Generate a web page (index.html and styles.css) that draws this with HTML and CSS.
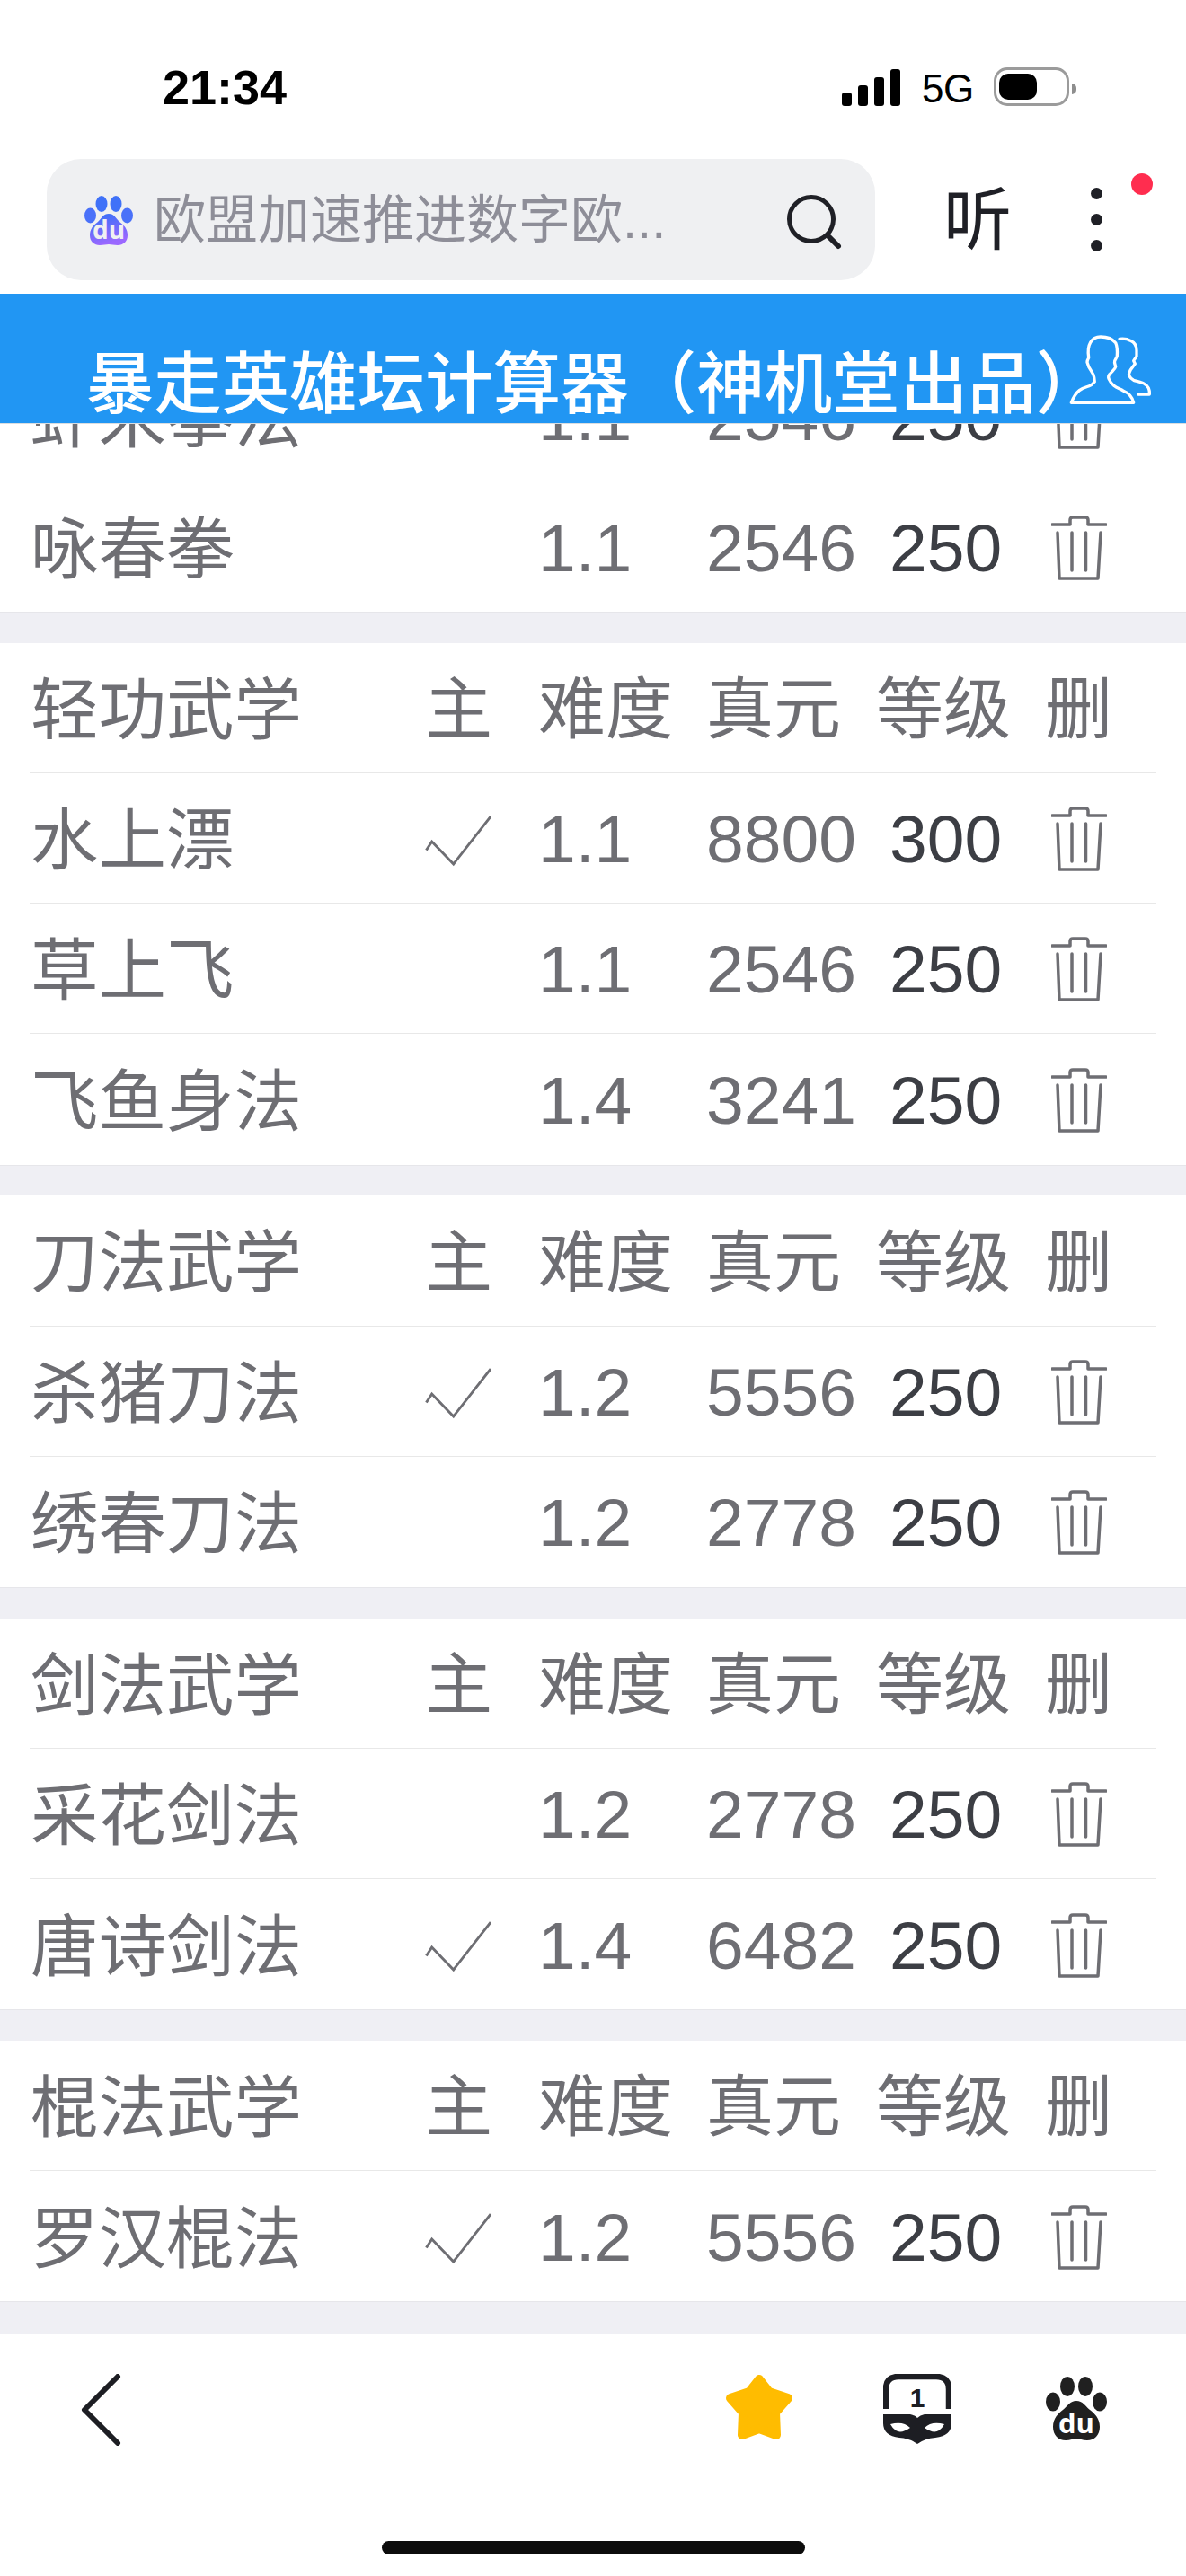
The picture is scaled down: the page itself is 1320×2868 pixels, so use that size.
FILE: index.html
```html
<!DOCTYPE html>
<html lang="zh">
<head>
<meta charset="utf-8">
<title>暴走英雄坛计算器</title>
<link rel="stylesheet" href="styles.css">
</head>
<body>
<div class="phone">
  <header class="status">
    <span class="time">21:34</span>
    <div class="status-right">
      <div class="signal"><i class="b1"></i><i class="b2"></i><i class="b3"></i><i class="b4"></i></div>
      <span class="net">5G</span>
      <div class="battery"><div class="battery-fill"></div></div>
      <div class="battery-cap"></div>
    </div>
  </header>

  <div class="browser">
    <div class="search">
      <svg class="paw" viewBox="0 0 54 56"><defs><linearGradient id="pg" x1="0" y1="0" x2="0.3" y2="1"><stop offset="0" stop-color="#3170f7"/><stop offset="1" stop-color="#9b68ff"/></linearGradient></defs><g fill="url(#pg)"><path d="M27 21c-6 0-8 5-12 9-4 3-9 7-9 15 0 7 5 11 11 11 4 0 7-1 10-1s6 1 10 1c6 0 11-4 11-11 0-8-5-12-9-15-4-4-6-9-12-9z"/></g><ellipse cx="19" cy="10" rx="6.500" ry="9" fill="#3f71f8"/><ellipse cx="35" cy="10" rx="6.500" ry="9" fill="#3f71f8"/><ellipse cx="6.500" cy="23" rx="6.500" ry="8.500" fill="#4a71f9"/><ellipse cx="47.500" cy="23" rx="6.500" ry="8.500" fill="#4a71f9"/><text class="du" x="27" y="49" text-anchor="middle">du</text></svg>
      <span class="query">欧盟加速推进数字欧...</span>
      <svg class="lens" viewBox="0 0 64 64"><circle cx="29" cy="29" r="24.500" fill="none" stroke="#1f2026" stroke-width="5"/><path d="M48 48l11 11" stroke="#1f2026" stroke-width="6" stroke-linecap="round"/></svg>
    </div>
    <span class="listen">听</span>
    <div class="more"><i></i><i></i><i></i></div>
    <span class="red-dot"></span>
  </div>

  <div class="title-bar">
    <h1 class="title">暴走英雄坛计算器（神机堂出品）</h1>
    <svg class="users" viewBox="0 0 94 80" fill="none" stroke="#fff" stroke-width="3.300" stroke-linejoin="round" stroke-linecap="round"><path d="M2.300 76.300H71.700C70 69 65 65 60 63 55 60 48 59 44 49.700 43 47 45 44.700 45 44.700 48 41 51 39 51.700 36.300 51 33 50 32 50.700 29.700L53.300 24.700C54 15 51.700 9.700 51.700 9.700 48 5 41.700 3 35 3 25 3 19.300 11.300 21.700 26.300 20 29 20 31.300 20 31.300L21.700 36.300C24 40 26.700 44.700 26.700 44.700 28 48 28.300 53 28.300 53 25 57 21.700 58 21.700 58 15 60 8.300 61.300 2.300 76.300Z"/><path d="M56 5.300C60 4.800 65 5.300 68.300 7.300 73 9.500 75 13 75 18V24.700L71.700 29.700 73.300 33 68.300 39.700C66.700 43 66 46 66.700 46.300 68 49 69 50 71.700 51.300 79 53.500 85 54 88.300 60 89.500 63 89.500 65 89.300 67H76.700"/></svg>
  </div>

  <main class="list">
    <section class="group group-scrolled">
      <div class="row"><span class="name">虾米拳法</span><span class="main"></span><span class="num">1.1</span><span class="num zy">2546</span><span class="lvl">250</span><svg class="trash" viewBox="0 0 62 73"><use href="#t"/></svg></div>
      <div class="row"><span class="name">咏春拳</span><span class="main"></span><span class="num">1.1</span><span class="num zy">2546</span><span class="lvl">250</span><svg class="trash" viewBox="0 0 62 73"><use href="#t"/></svg></div>
    </section>

    <section class="group">
      <div class="row"><span class="name">轻功武学</span><span class="main head">主</span><span class="head">难度</span><span class="head head-z">真元</span><span class="head head-l">等级</span><span class="head del">删</span></div>
      <div class="row"><span class="name">水上漂</span><span class="main"><svg class="check" viewBox="0 0 78 60"><use href="#c"/></svg></span><span class="num">1.1</span><span class="num zy">8800</span><span class="lvl">300</span><svg class="trash" viewBox="0 0 62 73"><use href="#t"/></svg></div>
      <div class="row"><span class="name">草上飞</span><span class="main"></span><span class="num">1.1</span><span class="num zy">2546</span><span class="lvl">250</span><svg class="trash" viewBox="0 0 62 73"><use href="#t"/></svg></div>
      <div class="row"><span class="name">飞鱼身法</span><span class="main"></span><span class="num">1.4</span><span class="num zy">3241</span><span class="lvl">250</span><svg class="trash" viewBox="0 0 62 73"><use href="#t"/></svg></div>
    </section>

    <section class="group">
      <div class="row"><span class="name">刀法武学</span><span class="main head">主</span><span class="head">难度</span><span class="head head-z">真元</span><span class="head head-l">等级</span><span class="head del">删</span></div>
      <div class="row"><span class="name">杀猪刀法</span><span class="main"><svg class="check" viewBox="0 0 78 60"><use href="#c"/></svg></span><span class="num">1.2</span><span class="num zy">5556</span><span class="lvl">250</span><svg class="trash" viewBox="0 0 62 73"><use href="#t"/></svg></div>
      <div class="row"><span class="name">绣春刀法</span><span class="main"></span><span class="num">1.2</span><span class="num zy">2778</span><span class="lvl">250</span><svg class="trash" viewBox="0 0 62 73"><use href="#t"/></svg></div>
    </section>

    <section class="group">
      <div class="row"><span class="name">剑法武学</span><span class="main head">主</span><span class="head">难度</span><span class="head head-z">真元</span><span class="head head-l">等级</span><span class="head del">删</span></div>
      <div class="row"><span class="name">采花剑法</span><span class="main"></span><span class="num">1.2</span><span class="num zy">2778</span><span class="lvl">250</span><svg class="trash" viewBox="0 0 62 73"><use href="#t"/></svg></div>
      <div class="row"><span class="name">唐诗剑法</span><span class="main"><svg class="check" viewBox="0 0 78 60"><use href="#c"/></svg></span><span class="num">1.4</span><span class="num zy">6482</span><span class="lvl">250</span><svg class="trash" viewBox="0 0 62 73"><use href="#t"/></svg></div>
    </section>

    <section class="group">
      <div class="row"><span class="name">棍法武学</span><span class="main head">主</span><span class="head">难度</span><span class="head head-z">真元</span><span class="head head-l">等级</span><span class="head del">删</span></div>
      <div class="row"><span class="name">罗汉棍法</span><span class="main"><svg class="check" viewBox="0 0 78 60"><use href="#c"/></svg></span><span class="num">1.2</span><span class="num zy">5556</span><span class="lvl">250</span><svg class="trash" viewBox="0 0 62 73"><use href="#t"/></svg></div>
    </section>
  </main>

  <footer class="toolbar">
    <svg class="back" viewBox="0 0 46 80"><path d="M42 3L5 40l37 37" fill="none" stroke="#1d1e23" stroke-width="6" stroke-linecap="round" stroke-linejoin="round"/></svg>
    <div class="tools">
      <svg class="star" viewBox="0 0 76 74"><path d="M38 6L49 20 70 27 56 43 57 68 38 61 19 68 20 43 6 27 27 20z" fill="#ffbc00" stroke="#ffbc00" stroke-width="10" stroke-linejoin="round"/></svg>
      <svg class="mask" viewBox="0 0 76 78"><path d="M3 39V17Q3 3 17 3H59Q73 3 73 17V39" fill="none" stroke="#1d1e23" stroke-width="6.500"/><text class="tab-num" x="38" y="37" text-anchor="middle">1</text><path d="M0 45H30Q35 46 38 49Q41 46 46 45H76V55Q76 69 58 71Q46 72 38 78Q30 72 18 71Q0 69 0 55Z" fill="#1d1e23"/><path d="M8 56Q22 52 30 60Q20 67 14 63Q10 60 8 56Z M68 56Q54 52 46 60Q56 67 62 63Q66 60 68 56Z" fill="#fff"/></svg>
      <svg class="paw-dark" viewBox="0 0 68 72"><path d="M34 27c-7 0-10 6-15 10-5 4-11 9-11 19 0 9 6 15 14 15 5 0 9-2 12-2s7 2 12 2c8 0 14-6 14-15 0-10-6-15-11-19-5-4-8-10-15-10z" fill="#202020"/><ellipse cx="24" cy="11" rx="8" ry="11" fill="#202020"/><ellipse cx="44" cy="11" rx="8" ry="11" fill="#202020"/><ellipse cx="8" cy="28" rx="8" ry="10.500" fill="#202020"/><ellipse cx="60" cy="28" rx="8" ry="10.500" fill="#202020"/><text class="du-dark" x="34" y="63" text-anchor="middle">du</text></svg>
    </div>
  </footer>
  <div class="home-area"><div class="home-bar"></div></div>
</div>

<svg class="defs" width="0" height="0">
  <symbol id="t" viewBox="0 0 62 73"><path d="M1 10H21V5Q21 2 24 2H38Q41 2 41 5V10H61M7 19L9 70H52L55 19M23 19V61M38.500 19V61" fill="none" stroke="#6e6e73" stroke-width="3.500" stroke-linecap="round" stroke-linejoin="round"/></symbol>
  <symbol id="c" viewBox="0 0 78 60"><path d="M1.500 41L8 31 33 57 76 2" fill="none" stroke="#6e6e73" stroke-width="3"/></symbol>
</svg>
</body>
</html>
```

FILE: styles.css
```css
* { box-sizing: border-box; }
html, body { margin: 0; padding: 0; background: #fff; }
body { font-family: "Liberation Sans", "Noto Sans CJK SC", sans-serif; }
.phone { width: 1320px; height: 2868px; display: flex; flex-direction: column; overflow: hidden; position: relative; }

.status { height: 177px; flex: none; display: flex; justify-content: space-between; padding: 75px 122px 0 181px; align-items: flex-start; }
.time { font-size: 54px; font-weight: 700; line-height: 45px; color: #000; }
.status-right { display: flex; align-items: flex-end; height: 43px; }
.signal { display: flex; align-items: flex-end; gap: 7px; width: 65px; height: 41px; }
.signal i { display: block; width: 11px; background: #000; border-radius: 3px; }
.b1 { height: 15px; } .b2 { height: 23px; } .b3 { height: 32px; } .b4 { height: 41px; }
.net { font-size: 44px; line-height: 38px; color: #000; margin-left: 24px; width: 56px; letter-spacing: -0.500px; }
.battery { width: 84px; height: 43px; margin-left: 24px; border: 3px solid #9b9b9b; border-radius: 15px; padding: 4px 3px; }
.battery-fill { width: 42px; height: 29px; background: #000; border-radius: 10px; }
.battery-cap { width: 5px; height: 12px; background: #8e8e8e; border-radius: 0 5px 5px 0; margin: 0 0 13px 3px; }

.browser { height: 150px; flex: none; position: relative; display: flex; align-items: flex-start; padding-left: 52px; }
.search { width: 922px; height: 135px; background: #eff0f2; border-radius: 38px; display: flex; align-items: center; padding: 0 36px 0 42px; flex: none; }
.paw { width: 54px; height: 56px; flex: none; }
.du { font: 700 28px "Open Sans", "Liberation Sans", sans-serif; fill: #eff0f2; }
.query { font-size: 58px; color: #8e8e98; margin-left: 23px; white-space: nowrap; line-height: 70px; }
.lens { width: 64px; height: 64px; margin-left: auto; margin-top: 4px; flex: none; }
.listen { font-size: 76px; line-height: 76px; color: #1f2026; margin: 31px 0 0 76px; }
.more { margin: 32px 0 0 88px; display: flex; flex-direction: column; gap: 16px; }
.more i { display: block; width: 13px; height: 13px; border-radius: 50%; background: #1f2026; }
.red-dot { position: absolute; left: 1259px; top: 16px; width: 24px; height: 24px; border-radius: 50%; background: #ff2d4f; }

.title-bar { height: 145px; flex: none; background: #2196f3; position: relative; z-index: 2; border-bottom: 1px solid #d9dde0; display: flex; align-items: flex-end; justify-content: center; padding-left: 4px; }
.title { margin: 0 0 2px; font-size: 75.500px; line-height: 82px; font-weight: 500; color: #fff; white-space: nowrap; }
.users { position: absolute; left: 1190px; top: 45px; width: 94px; height: 80px; }

.list { flex: 1 1 0; min-height: 0; overflow: hidden; background: #efeff4; }
.group { background: #fff; padding-left: 33px; margin-bottom: 33.700px; border-bottom: 1px solid #e6e6ea; }
.group-scrolled { margin-top: -81.200px; }
.row { height: 145.200px; width: 1254px; display: grid; grid-template-columns: 440px 129px 185px 189px 190px 1fr; align-items: center; border-bottom: 1px solid #e8e8e8; font-size: 75px; color: #6e6e73; white-space: nowrap; }
.row:last-child { border-bottom: 0; }
.name { margin-left: 1px; padding-bottom: 8px; font-size: 75.500px; }
.head { padding-bottom: 8px; margin-left: -3px; }
.main { display: flex; justify-content: center; padding-right: 54px; margin-left: 0; padding-top: 5px; }
.main.head { padding-top: 0; margin-left: 0; }
.num { margin-left: -3px; padding-top: 2px; }
.zy { margin-left: -1px; }
.head-z { margin-left: -1px; }
.head-l { margin-left: -1px; }
.lvl { padding-left: 14px; padding-top: 2px; color: #3c3e44; }
.del { margin-left: -3px; }
.check { width: 78px; height: 60px; display: block; }
.trash { width: 62px; height: 73px; display: block; margin-left: 4px; margin-top: 3px; }

.toolbar { height: 170px; flex: none; display: flex; justify-content: space-between; align-items: flex-start; padding: 44px 88px 0 89px; background: #fff; }
.back { width: 46px; height: 80px; }
.tools { display: flex; align-items: flex-start; }
.star { width: 76px; height: 74px; }
.mask { width: 76px; height: 78px; margin-left: 100px; }
.tab-num { font: 700 30px "Liberation Sans", sans-serif; fill: #1d1e23; }
.paw-dark { width: 68px; height: 72px; margin-left: 105px; margin-top: 3px; }
.du-dark { font: 700 31px "Open Sans", "Liberation Sans", sans-serif; fill: #fff; }
.home-area { height: 99px; flex: none; background: #fff; }
.home-bar { width: 471px; height: 15px; background: #0c0c0c; border-radius: 8px; margin: 60px auto 0; }
.defs { position: absolute; }
```
